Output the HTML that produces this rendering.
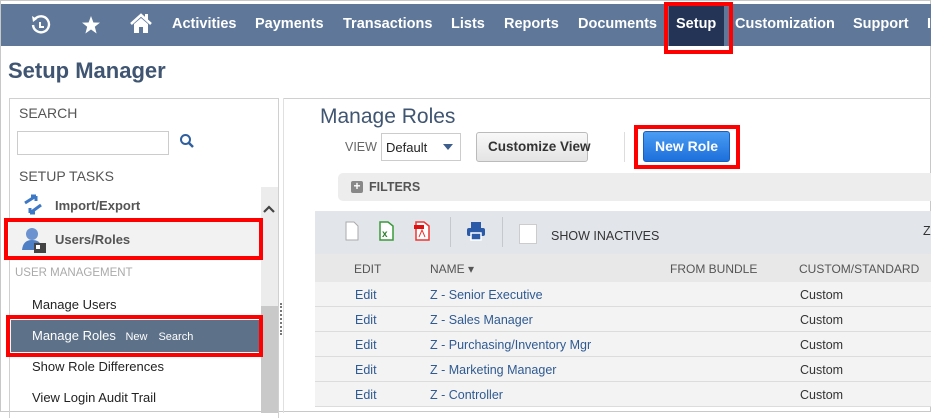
<!DOCTYPE html>
<html><head><meta charset="utf-8"><style>
*{margin:0;padding:0;box-sizing:border-box}
body{width:931px;height:412px;overflow:hidden;background:#fff;font-family:"Liberation Sans",Arial,sans-serif;position:relative;border:1px solid #c8c8c8}
.a{position:absolute}
.nav{left:0;top:3px;width:931px;height:42px;background:#5f7899}
.nav span{position:absolute;top:12px;color:#fff;font-weight:bold;font-size:14.5px}
.red{position:absolute;border:4px solid #f00}
.t{position:absolute;white-space:nowrap}
.row{position:absolute;left:314px;width:617px;height:25px;background:#f3f3f3;border-bottom:1px solid #dcdcdc;font-size:12.5px}
.row span{position:absolute;top:6px}
.lnk{color:#2f5a92}
</style></head><body>
<div class="a nav">
<svg class="a" style="left:28px;top:9px" width="22" height="24" viewBox="0 0 22 24"><path d="M6 6 A8 8 0 1 1 4 12" fill="none" stroke="#fff" stroke-width="2.4"/><path d="M3 3 L8 6 L4 9z" fill="#fff"/><path d="M11 9 V14 H15" fill="none" stroke="#fff" stroke-width="2"/></svg>
<svg class="a" style="left:80px;top:11px" width="20" height="20" viewBox="0 0 20 20"><path d="M10 1 L12.4 7.5 L19 7.6 L13.8 11.7 L15.6 18.5 L10 14.5 L4.4 18.5 L6.2 11.7 L1 7.6 L7.6 7.5z" fill="#fff"/></svg>
<svg class="a" style="left:128px;top:8px" width="24" height="24" viewBox="0 0 24 24"><path d="M2 12 L12 3 L22 12" fill="none" stroke="#fff" stroke-width="2.6"/><path d="M5 12 L12 6 L19 12 V21 H14 V15 H10 V21 H5z" fill="#fff"/><rect x="16" y="2" width="3" height="6" fill="#fff"/></svg>
<span style="left:171px">Activities</span>
<span style="left:254px">Payments</span>
<span style="left:342px">Transactions</span>
<span style="left:450px">Lists</span>
<span style="left:503px">Reports</span>
<span style="left:577px">Documents</span>
<div class="a" style="left:668px;top:0;width:55px;height:42px;background:#233456"></div>
<span style="left:675px">Setup</span>
<span style="left:734px">Customization</span>
<span style="left:852px">Support</span>
<span style="left:926px">I</span>
</div>
<div class="red" style="left:663px;top:1px;width:69px;height:52px"></div>
<div class="t" style="left:7px;top:57px;font-size:22px;font-weight:bold;color:#3f5572">Setup Manager</div>

<div class="a" style="left:8px;top:97px;width:270px;height:320px;border:1px solid #d0d0d0;border-bottom:none"></div>
<div class="t" style="left:18px;top:104px;font-size:14px;color:#555">SEARCH</div>
<div class="a" style="left:16px;top:130px;width:152px;height:24px;border:1px solid #ccc;background:#fff"></div>
<svg class="a" style="left:178px;top:132px" width="16" height="16" viewBox="0 0 16 16"><circle cx="6.5" cy="6.5" r="4.5" fill="none" stroke="#2f5f9e" stroke-width="2"/><path d="M10 10 L14 14" stroke="#2f5f9e" stroke-width="2.5"/></svg>
<div class="t" style="left:18px;top:167px;font-size:14px;color:#555">SETUP TASKS</div>
<div class="a" style="left:260px;top:186px;width:17px;height:226px;background:#ececec"></div>
<div class="a" style="left:260px;top:305px;width:17px;height:107px;background:#c9c9c9"></div>
<svg class="a" style="left:262px;top:204px" width="12" height="9"><path d="M1 7 L6 2 L11 7" stroke="#444" stroke-width="2.2" fill="none"/></svg>
<svg class="a" style="left:21px;top:192px" width="22" height="24" viewBox="0 0 22 24"><path d="M3 10 L14 3 M14 3 H9 M14 3 V8" stroke="#3d78c6" stroke-width="3" fill="none"/><path d="M19 12 L8 20 M8 20 H13 M8 20 V15" stroke="#3d78c6" stroke-width="3" fill="none"/></svg>
<div class="t" style="left:54px;top:197px;font-size:13px;font-weight:bold;color:#555">Import/Export</div>
<div class="a" style="left:8px;top:221px;width:250px;height:36px;background:#f2f2f2"></div>
<svg class="a" style="left:20px;top:225px" width="26" height="28" viewBox="0 0 26 28"><circle cx="11" cy="8" r="6" fill="#6c93cf"/><path d="M1 24 Q2 14 11 14 Q19 14 20 20 V24z" fill="#4f7fc4"/><rect x="13" y="17" width="12" height="10" fill="#444"/><rect x="15" y="19" width="4" height="4" fill="#fff"/></svg>
<div class="t" style="left:54px;top:231px;font-size:13px;font-weight:bold;color:#555">Users/Roles</div>
<div class="red" style="left:3px;top:217px;width:259px;height:42px"></div>
<div class="t" style="left:14px;top:266px;font-size:11.5px;color:#aaa">USER MANAGEMENT</div>
<div class="t" style="left:31px;top:296px;font-size:13px;color:#222">Manage Users</div>
<div class="a" style="left:10px;top:319px;width:248px;height:32px;background:#5d7189"></div>
<div class="t" style="left:31px;top:327px;font-size:13px;color:#fff">Manage Roles <span style="font-size:11px;margin-left:6px">New</span><span style="font-size:11px;margin-left:11px">Search</span></div>
<div class="red" style="left:5px;top:314px;width:257px;height:42px"></div>
<div class="t" style="left:31px;top:358px;font-size:13px;color:#222">Show Role Differences</div>
<div class="t" style="left:31px;top:389px;font-size:13px;color:#222">View Login Audit Trail</div>
<div class="a" style="left:279px;top:302px;width:1px;height:32px;border-left:2px dotted #777"></div>

<div class="a" style="left:282px;top:97px;width:649px;height:1px;background:#d0d0d0"></div>
<div class="a" style="left:282px;top:97px;width:1px;height:315px;background:#e0e0e0"></div>
<div class="t" style="left:319px;top:104px;font-size:21px;color:#3f5572">Manage Roles</div>
<div class="t" style="left:344px;top:139px;font-size:12.5px;color:#666">VIEW</div>
<div class="a" style="left:380px;top:132px;width:80px;height:28px;border:1px solid #ccc;background:#fff"></div>
<div class="t" style="left:385px;top:139px;font-size:13px;color:#222">Default</div>
<div class="a" style="left:442px;top:143px;width:0;height:0;border-left:5px solid transparent;border-right:5px solid transparent;border-top:6px solid #3d5d8c"></div>
<div class="a" style="left:475px;top:131px;width:112px;height:30px;border:1px solid #bbb;border-radius:3px;background:linear-gradient(#f8f8f8,#e4e4e4)"></div>
<div class="t" style="left:487px;top:138px;font-size:13.5px;font-weight:bold;color:#333">Customize View</div>
<div class="a" style="left:623px;top:131px;width:1px;height:30px;background:#ddd"></div>
<div class="a" style="left:642px;top:130px;width:87px;height:31px;border-radius:3px;background:linear-gradient(#4a9cf3,#1d6fdb);border:1px solid #1a5fc0"></div>
<div class="t" style="left:654px;top:137px;font-size:14px;font-weight:bold;color:#fff">New Role</div>
<div class="red" style="left:633px;top:124px;width:106px;height:44px"></div>
<div class="a" style="left:337px;top:172px;width:594px;height:28px;background:#ededed;border-radius:5px 0 0 5px"></div>
<div class="a" style="left:350px;top:180px;width:12px;height:12px;background:#888;border-radius:2px;color:#fff;font-size:12px;line-height:11px;text-align:center;font-weight:bold">+</div>
<div class="t" style="left:368px;top:179px;font-size:12.5px;font-weight:bold;color:#555">FILTERS</div>
<div class="a" style="left:314px;top:210px;width:617px;height:43px;background:#e2e6eb"></div>
<svg class="a" style="left:344px;top:220px" width="14" height="20"><path d="M1 1 H9 L13 5 V19 H1z" fill="#fff" stroke="#aaa"/></svg>
<svg class="a" style="left:378px;top:220px" width="15" height="20"><path d="M1 1 H9 L14 5 V19 H1z" fill="#fff" stroke="#3a9a3a" stroke-width="1.5"/><text x="3" y="16" font-size="10" font-weight="bold" fill="#2f7f2f" font-family="Liberation Sans">x</text></svg>
<svg class="a" style="left:413px;top:220px" width="16" height="20"><path d="M2 1 H10 L15 5 V19 H2z" fill="#fff" stroke="#e33" stroke-width="1.5"/><rect x="0" y="4" width="10" height="4" fill="#d11"/><path d="M5 16 L8 9 L11 16" stroke="#e33" fill="none"/></svg>
<div class="a" style="left:449px;top:216px;width:1px;height:30px;background:#c5c9ce"></div>
<svg class="a" style="left:465px;top:220px" width="20" height="20"><rect x="5" y="1" width="10" height="6" fill="#2a5aa8"/><rect x="1" y="7" width="18" height="8" rx="2" fill="#2a5aa8"/><rect x="5" y="12" width="10" height="7" fill="#2a5aa8" stroke="#fff" stroke-width="1.5"/></svg>
<div class="a" style="left:501px;top:216px;width:1px;height:30px;background:#c5c9ce"></div>
<div class="a" style="left:518px;top:223px;width:18px;height:20px;background:#fff;border:1px solid #ccc"></div>
<div class="t" style="left:550px;top:228px;font-size:12.5px;color:#333">SHOW INACTIVES</div>
<div class="t" style="left:922px;top:223px;font-size:12.5px;color:#333">Z</div>
<div class="a" style="left:314px;top:253px;width:617px;height:28px;background:#e8e8e8;font-size:12px;color:#555">
<span class="a" style="left:39px;top:8px">EDIT</span><span class="a" style="left:115px;top:8px">NAME ▾</span><span class="a" style="left:355px;top:8px">FROM BUNDLE</span><span class="a" style="left:484px;top:8px">CUSTOM/STANDARD</span></div>
<div class="row" style="top:281px"><span class="lnk" style="left:40px">Edit</span><span class="lnk" style="left:115px">Z - Senior Executive</span><span style="left:485px;color:#333">Custom</span></div>
<div class="row" style="top:306px"><span class="lnk" style="left:40px">Edit</span><span class="lnk" style="left:115px">Z - Sales Manager</span><span style="left:485px;color:#333">Custom</span></div>
<div class="row" style="top:331px"><span class="lnk" style="left:40px">Edit</span><span class="lnk" style="left:115px">Z - Purchasing/Inventory Mgr</span><span style="left:485px;color:#333">Custom</span></div>
<div class="row" style="top:356px"><span class="lnk" style="left:40px">Edit</span><span class="lnk" style="left:115px">Z - Marketing Manager</span><span style="left:485px;color:#333">Custom</span></div>
<div class="row" style="top:381px"><span class="lnk" style="left:40px">Edit</span><span class="lnk" style="left:115px">Z - Controller</span><span style="left:485px;color:#333">Custom</span></div>
</body></html>
